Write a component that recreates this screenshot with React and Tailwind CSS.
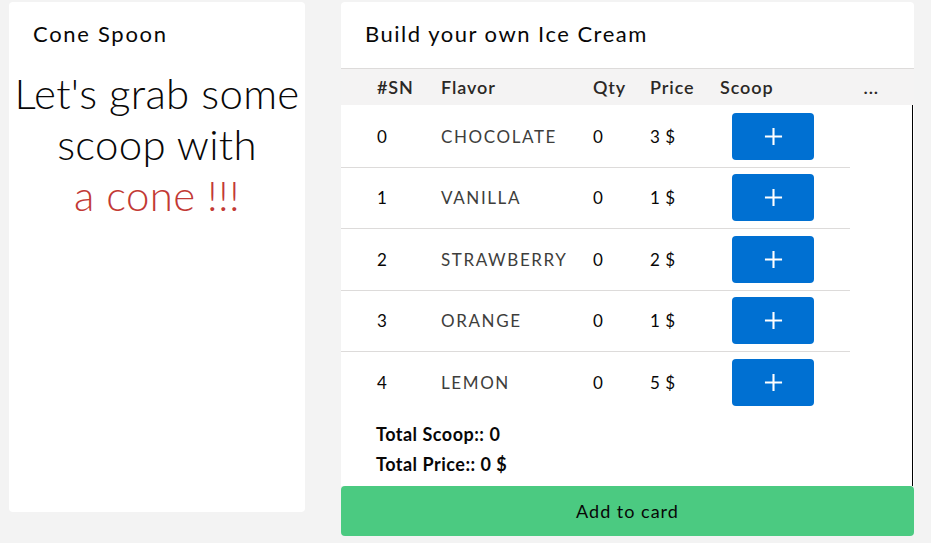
import React, { useState } from 'react';

const FLAVORS = [
  { sn: 0, name: 'Chocolate', price: 3 },
  { sn: 1, name: 'Vanilla', price: 1 },
  { sn: 2, name: 'Strawberry', price: 2 },
  { sn: 3, name: 'Orange', price: 1 },
  { sn: 4, name: 'Lemon', price: 5 },
];

const cols = 'grid grid-cols-[64px_152px_57px_70px_1fr] items-center pl-[36px]';

export default function App() {
  const [qty, setQty] = useState(FLAVORS.map(() => 0));

  const totalScoop = qty.reduce((a, b) => a + b, 0);
  const totalPrice = qty.reduce((sum, q, i) => sum + q * FLAVORS[i].price, 0);

  const addScoop = (i) => {
    setQty((prev) => prev.map((q, j) => (j === i ? q + 1 : q)));
  };

  return (
    <div className="w-[931px] h-[543px] bg-[#f3f3f3] flex pl-[9px] pt-[2px] gap-[36px] font-['Lato',sans-serif] text-[#080707]">
      {/* left card */}
      <div className="w-[296px] h-[510px] bg-white rounded-[4px] flex flex-col">
        <h2 className="pl-[24px] pt-[18px] text-[22px] leading-[28px] tracking-[1.7px]">Cone Spoon</h2>
        <p className="mt-[20px] text-center text-[42px] leading-[51px] font-light tracking-[0.3px]">
          Let's grab some
          <br />
          scoop with
          <br />
          <span className="text-[#c23934]">a cone !!!</span>
        </p>
      </div>

      {/* right column */}
      <div className="w-[573px] flex flex-col">
        <div className="h-[484px] bg-white rounded-t-[4px] flex flex-col">
          <h2 className="h-[66px] flex items-center pb-[3px] pl-[24px] text-[22px] tracking-[1.5px]">Build your own Ice Cream</h2>
          <div className={`${cols} h-[37px] bg-[#f4f3f3] border-t border-[#dddbda] text-[18px] font-semibold tracking-[0.9px] text-[#2b2826]`}>
            <span>#SN</span>
            <span>Flavor</span>
            <span>Qty</span>
            <span>Price</span>
            <div className="flex justify-between pr-[35px]">
              <span>Scoop</span>
              <span>...</span>
            </div>
          </div>
          <div className="flex-1 border-r border-black w-[572px]">
            <div className="w-[509px] pt-[1px]">
              {FLAVORS.map((f, i) => (
                <div
                  key={f.sn}
                  className={`${cols} h-[61.5px] ${i < FLAVORS.length - 1 ? 'border-b border-[#dddbda]' : ''} text-[17px]`}
                >
                  <span>{f.sn}</span>
                  <span className="uppercase tracking-[1.6px] text-[#3e3e3c]">{f.name}</span>
                  <span>{qty[i]}</span>
                  <span className="tracking-[0.5px]">{f.price} $</span>
                  <div className="pl-[12px]">
                    <button
                      onClick={() => addScoop(i)}
                      className="w-[82px] h-[47px] rounded-[4px] bg-[#0070d2] text-white flex items-center justify-center"
                    >
                      <svg width="19" height="19" viewBox="0 0 20 20" fill="none" stroke="currentColor" strokeWidth="2.2">
                        <path d="M10 1v18M1 10h18" />
                      </svg>
                    </button>
                  </div>
                </div>
              ))}
            </div>
            <div className="pl-[35px] pt-[5px] text-[18px] font-bold leading-[30px] tracking-[0.5px]">
              <p>Total Scoop:: {totalScoop}</p>
              <p>Total Price:: {totalPrice} $</p>
            </div>
          </div>
        </div>
        <button className="h-[50px] bg-[#4bca81] rounded-[4px] text-[18px] tracking-[1px] text-[#080707]">Add to card</button>
      </div>
    </div>
  );
}
